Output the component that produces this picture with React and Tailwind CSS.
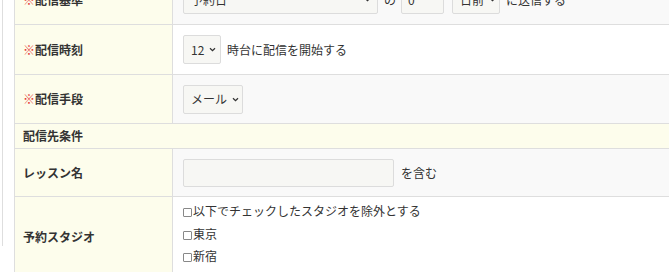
import { useState } from "react";

const font = { fontFamily: '"Noto Sans CJK JP", "Noto Sans", sans-serif' };

const Chevron = () => (
  <svg width="7" height="5" viewBox="0 0 7 5" className="shrink-0">
    <path d="M1 1.2 L3.5 3.6 L6 1.2" fill="none" stroke="#333" strokeWidth="1.3" />
  </svg>
);

const FakeSelect = ({ label, className = "" }) => (
  <div
    className={`h-[29px] shrink-0 whitespace-nowrap flex items-center justify-between gap-[5px] pl-[7px] pr-[6px] border border-[#dcdcdc] rounded-[2px] bg-[#f7f7f4] text-[12px] text-[#333] ${className}`}
  >
    <span>{label}</span>
    <Chevron />
  </div>
);

const Label = ({ required, children, className = "" }) => (
  <div
    className={`w-[158px] shrink-0 bg-[#fdfdec] border-r border-[#dedede] pl-[8px] flex items-center whitespace-nowrap text-[12px] font-bold text-[#333] ${className}`}
  >
    {required && <span className="text-[#e53935]">※</span>}
    {children}
  </div>
);

const Row = ({ children, h = "" }) => (
  <div className={`flex border-b border-[#dedede] ${h}`}>{children}</div>
);

const Value = ({ children, striped }) => (
  <div
    className={`flex-1 flex items-center whitespace-nowrap px-[10px] text-[12px] text-[#333] ${striped ? "bg-[#f9f9f9]" : "bg-white"}`}
  >
    {children}
  </div>
);

const Check = ({ label }) => {
  const [checked, setChecked] = useState(false);
  return (
    <label className="flex items-center h-[22.5px] whitespace-nowrap">
      <input
        type="checkbox"
        checked={checked}
        onChange={() => setChecked(!checked)}
        className="appearance-none shrink-0 w-[9px] h-[9px] border border-[#888] rounded-[1px] bg-white mt-[3px] mr-[1px] checked:bg-[#555]"
      />
      {label}
    </label>
  );
};

export default function App() {
  return (
    <div className="w-[669px] h-[272px] overflow-hidden bg-white" style={font}>
      <div className="ml-[2px] border-l border-[#dedede] pl-[11px] h-full">
        <div className="mt-[-26px] border-l border-t border-[#dedede]">
          <Row h="h-[50px]">
            <Label required>配信基準</Label>
            <Value striped>
              <FakeSelect label="予約日" className="w-[195px]" />
              <span className="ml-[6px]">の</span>
              <div className="ml-[5px] w-[43px] h-[29px] border border-[#dcdcdc] rounded-[2px] bg-[#f7f7f4] flex items-center pl-[6px]">
                0
              </div>
              <FakeSelect label="日前" className="ml-[8px] w-[48px]" />
              <span className="ml-[6px]">に送信する</span>
            </Value>
          </Row>
          <Row h="h-[50px]">
            <Label required>配信時刻</Label>
            <Value>
              <FakeSelect label="12" className="w-[38px]" />
              <span className="ml-[6px]">時台に配信を開始する</span>
            </Value>
          </Row>
          <Row h="h-[49px]">
            <Label required>配信手段</Label>
            <Value striped>
              <FakeSelect label="メール" className="w-[60px]" />
            </Value>
          </Row>
          <div className="h-[25px] border-b border-[#dedede] bg-[#fdfdec] pl-[8px] flex items-center text-[12px] font-bold text-[#333]">
            配信先条件
          </div>
          <Row h="h-[48px]">
            <Label>レッスン名</Label>
            <Value striped>
              <input
                type="text"
                className="w-[211px] h-[28px] border border-[#dcdcdc] rounded-[2px] bg-[#f7f7f4] outline-none px-[6px] text-[12px]"
              />
              <span className="ml-[7px]">を含む</span>
            </Value>
          </Row>
          <div className="flex border-b border-[#dedede]">
            <Label>予約スタジオ</Label>
            <div className="flex-1 px-[10px] pt-[3px] pb-[10px] text-[12px] text-[#333] bg-white">
              <Check label="以下でチェックしたスタジオを除外とする" />
              <Check label="東京" />
              <Check label="新宿" />
            </div>
          </div>
        </div>
      </div>
    </div>
  );
}
